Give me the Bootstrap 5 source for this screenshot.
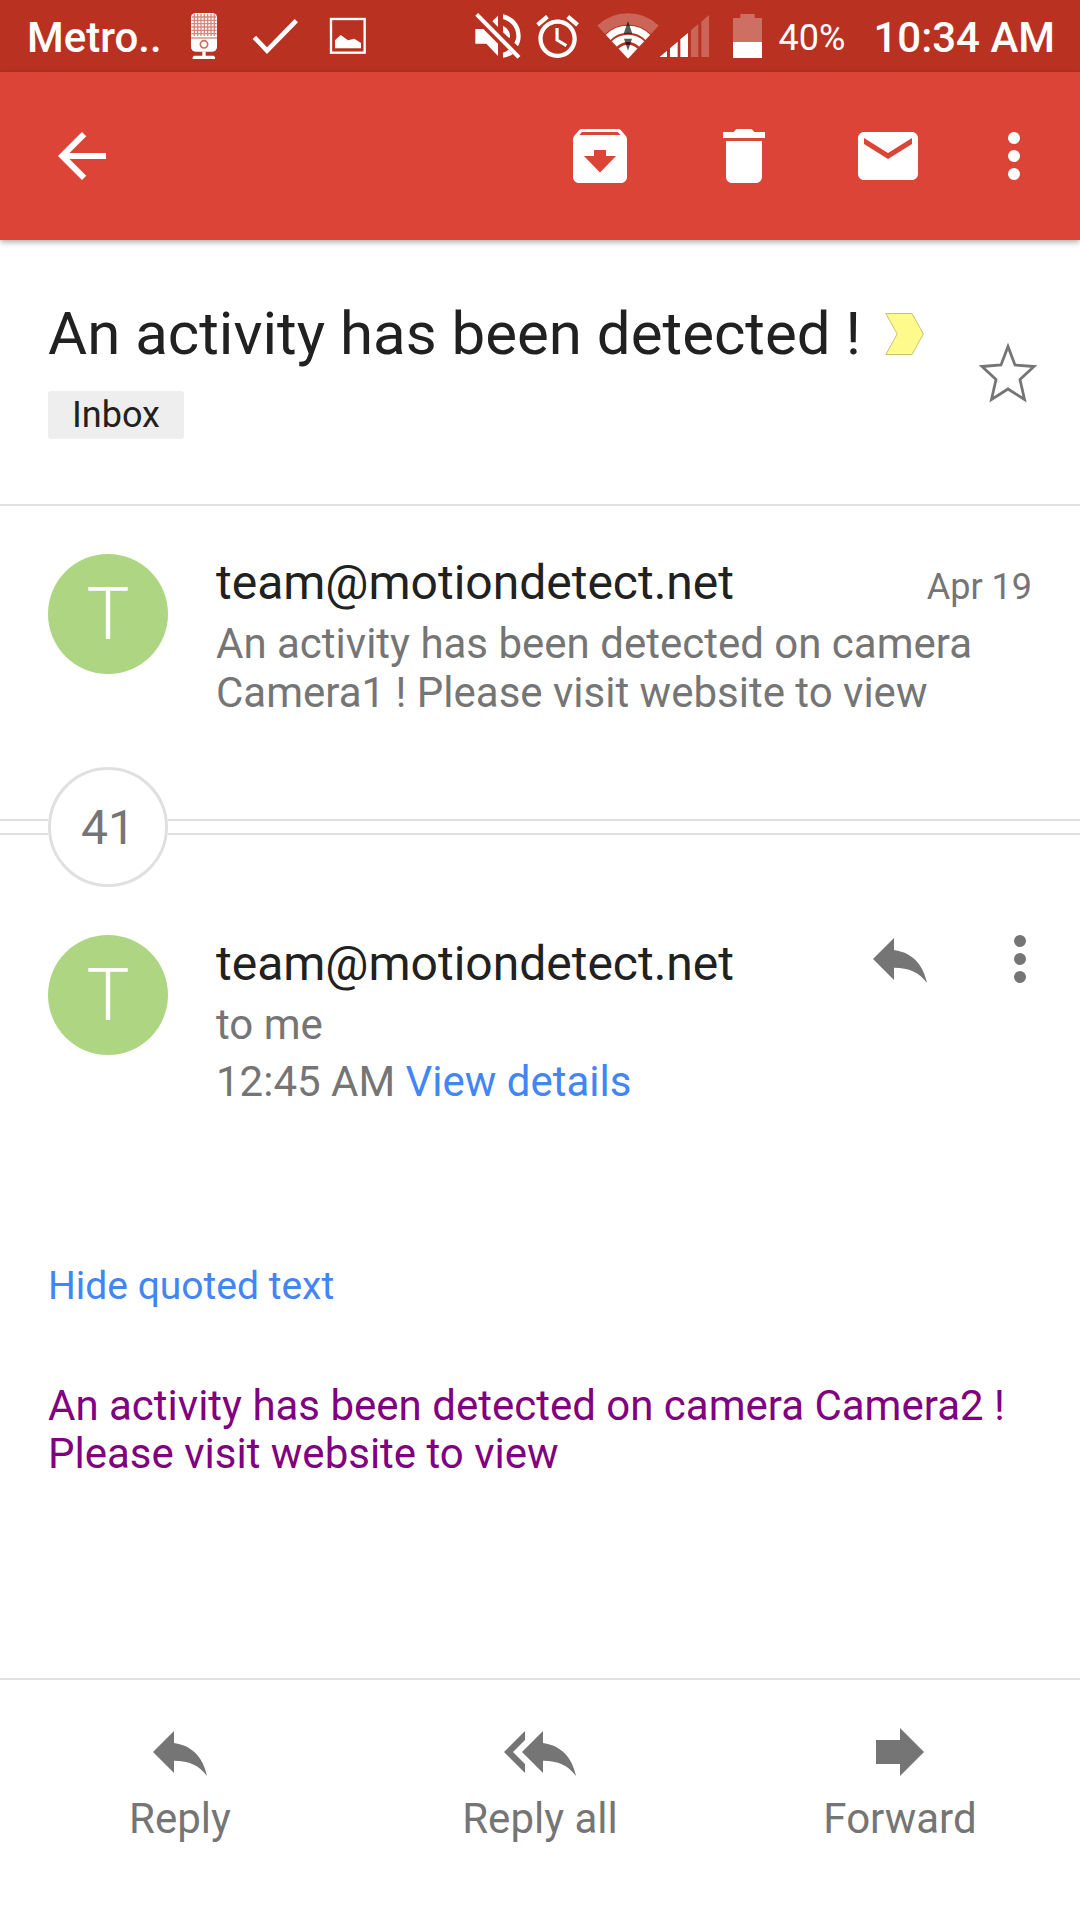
<!DOCTYPE html>
<html lang="en">
<head>
<meta charset="utf-8">
<meta name="viewport" content="width=device-width, initial-scale=1">
<title>An activity has been detected !</title>
<link href="https://cdn.jsdelivr.net/npm/bootstrap@5.3.0/dist/css/bootstrap.min.css" rel="stylesheet">
<style>
  body { font-family: Roboto, "Liberation Sans", sans-serif; color: #212121; font-size: 42px; line-height: 49px; }
  svg { display: block; flex: none; }
  a { color: #4285f4; text-decoration: none; }
  .icon-btn, .act-btn { border: 0; background: none; padding: 0; color: inherit; }
  .icon-btn { display: flex; align-items: center; justify-content: center; flex: none; }
  .status-bar { height: 72px; background: #b93221; padding: 0 25px 0 27px; }
  .status-text { padding-top: 4px; line-height: 68px; }
  .status-strong { font-weight: 500; }
  .status-carrier { margin-right: 6px; }
  .text-36 { font-size: 36px; }
  .app-bar { height: 168px; background: #db4437; padding: 0 12px 0 10px; box-shadow: 0 2px 6px rgba(0,0,0,.35); position: relative; }
  .app-bar .icon-btn { width: 144px; height: 144px; }
  .app-bar .icon-btn.overflow-btn { width: 108px; }
  .ink-muted { color: #757575; }
  .subject-row { padding: 0 36px 0 48px; border-bottom: 2px solid #e0e0e0; }
  .subject-text { padding: 58px 0 65px; }
  .subject-row .icon-btn { width: 72px; height: 72px; }
  .subject-title { font-size: 60px; line-height: 72px; font-weight: 400; margin: 0; }
  .subject-line { gap: 24px; margin-bottom: 21px; }
  .inbox-chip { display: block; width: fit-content; background: #eee; border-radius: 3px; padding: 0 24px; font-size: 36px; line-height: 48px; color: inherit; }
  .msg { padding: 48px 48px 0; gap: 48px; }
  .msg-first { padding-bottom: 50px; }
  .avatar { width: 120px; height: 120px; flex: none; background: #aed581; font-size: 72px; font-weight: 300; }
  .sender { font-size: 48px; line-height: 58px; margin-bottom: 7px; }
  .sender time { line-height: 42px; }
  .msg-tools { gap: 48px; margin-right: -24px; }
  .older { height: 120px; }
  .rails { height: 16px; border: solid #e0e0e0; border-width: 2px 0; }
  .rails-start { width: 48px; flex: none; }
  .older-count { width: 120px; height: 120px; flex: none; border: 3px solid #e0e0e0; background: #fff; font-size: 48px; }
  .msg-body { padding: 156px 48px 72px; line-height: 48px; }
  .quote-toggle { font-size: 39px; display: block; width: fit-content; margin-bottom: 72px; }
  .quoted { color: #800080; }
  .reply-bar { border-top: 2px solid #e0e0e0; padding: 36px 0 77px; }
  .act-btn { flex: 1 1 0; display: flex; flex-direction: column; align-items: center; gap: 7px; line-height: 48px; }
</style>
<script src="https://cdn.jsdelivr.net/npm/bootstrap@5.3.0/dist/js/bootstrap.bundle.min.js"></script>
</head>
<body class="bg-white d-flex flex-column min-vh-100">

<div class="status-bar text-white d-flex align-items-center">
  <span class="status-text status-strong status-carrier">Metro..</span>
  <svg width="72" height="72" viewBox="504 0 216 216" aria-label="Recorder">
    <rect x="573" y="39" width="78" height="116" rx="14" fill="#fff"/>
    <path d="M576 51h72M574 61h76M574 71h76M574 81h76M574 91h76M574 101h76M583 41v67M593 41v67M603 41v67M613 41v67M623 41v67M633 41v67M643 41v67" stroke="#d9857b" stroke-width="4"/>
    <path d="M573 114h78" stroke="#d9857b" stroke-width="4"/>
    <circle cx="612" cy="133" r="11" fill="none" stroke="#cf6a5e" stroke-width="5"/>
    <path d="M607 155h10v12h24l4 4v6h-67v-6l4-4h25z" fill="#fff"/>
  </svg>
  <svg width="72" height="72" viewBox="720 0 216 216" aria-label="Done"><path d="M763 112l38 40 88-90" fill="none" stroke="#fff" stroke-width="14"/></svg>
  <svg width="72" height="72" viewBox="936 0 216 216" aria-label="Picture"><rect x="993" y="57" width="101" height="101" fill="none" stroke="#fff" stroke-width="7"/><path d="M1005 145v-24l17-16 22 16 19-5 20 13v16z" fill="#fff"/></svg>

  <svg class="ms-auto" width="60" height="72" viewBox="54 0 180 216" fill="#fff" aria-label="Muted">
    <path d="M79 87h24l44 44v37l-35-37H79zM147 47v34l-17-17z"/>
    <path d="M162 43C195 50 215 75 215 108c0 12-3 22-8 31l-11-11c4-6 6-13 6-20 0-25-16-44-40-51zM162 78c13 6 21 17 21 30 0 3-1 5-2 7l-19-18zM162 158c6-2 12-5 17-9l13 13c-9 6-19 10-30 11z"/>
    <path d="M83 43l127 129" stroke="#fff" stroke-width="12"/>
  </svg>
  <svg width="60" height="72" viewBox="234 0 180 216" aria-label="Alarm set"><path transform="translate(249 33) scale(6.4)" fill="#fff" d="M22 5.72l-4.6-3.86-1.29 1.53 4.6 3.86L22 5.72zM7.88 3.39L6.6 1.86 2 5.71l1.29 1.53 4.59-3.85zM12.5 8H11v6l4.75 2.85.75-1.23-4-2.37V8zM12 4c-4.97 0-9 4.03-9 9s4.02 9 9 9c4.97 0 9-4.03 9-9s-4.03-9-9-9zm0 16c-3.87 0-7-3.13-7-7s3.13-7 7-7 7 3.13 7 7-3.13 7-7 7z"/></svg>
  <svg width="72" height="72" viewBox="414 0 216 216" aria-label="Wi-Fi">
    <clipPath id="fan"><path d="M537 176L444 76V20h186v56z"/></clipPath>
    <g clip-path="url(#fan)" fill="none" stroke="#fff">
      <circle cx="537" cy="174" r="117" stroke-width="34" opacity=".25"/>
      <circle cx="537" cy="174" r="86" stroke-width="21"/>
      <circle cx="537" cy="174" r="59" stroke-width="22"/>
      <circle cx="537" cy="174" r="40" fill="#fff" stroke="none"/>
    </g>
    <path d="M537 63l13 38h-26zM537 152l-12-36h24z" opacity=".65"/>
  </svg>
  <svg width="60" height="72" viewBox="630 0 180 216" fill="#fff" aria-label="Signal"><path d="M632 171l22-19v19zM663 171v-26l23-20v46zM694 171v-53l23-19v72z"/><path opacity=".25" d="M726 171V91l22-19v99zM757 171V65l23-20v126z"/></svg>
  <svg width="60" height="72" viewBox="810 0 180 216" fill="#fff" aria-label="Battery"><path opacity=".3" d="M852 54h22V42h43v12h22v72h-87z"/><path d="M852 126h87v48h-87z"/></svg>
  <span class="status-text text-36">40%</span>
  <span class="status-text status-strong ms-4 ps-1">10:34 AM</span>
</div>

<header class="app-bar text-white d-flex align-items-center">
  <button class="icon-btn me-auto" aria-label="Back"><svg width="72" height="72" viewBox="0 0 24 24" fill="#fff"><path d="M20 11H7.83l5.59-5.59L12 4l-8 8 8 8 1.41-1.41L7.83 13H20v-2z"/></svg></button>
  <button class="icon-btn" aria-label="Archive"><svg width="72" height="72" viewBox="0 0 24 24" fill="#fff"><path d="M20.54 5.23l-1.39-1.68C18.88 3.21 18.47 3 18 3H6c-.47 0-.88.21-1.16.55L3.46 5.23C3.17 5.57 3 6.02 3 6.5V19c0 1.1.9 2 2 2h14c1.1 0 2-.9 2-2V6.5c0-.48-.17-.93-.46-1.27zM12 17.5L6.65 12H10v-2h4v2h3.35L12 17.5zM5.12 5l.81-1h12l.94 1H5.12z"/></svg></button>
  <button class="icon-btn" aria-label="Delete"><svg width="72" height="72" viewBox="0 0 24 24" fill="#fff"><path d="M6 19c0 1.1.9 2 2 2h8c1.1 0 2-.9 2-2V7H6v12zM19 4h-3.5l-1-1h-5l-1 1H5v2h14V4z"/></svg></button>
  <button class="icon-btn" aria-label="Mark unread"><svg width="72" height="72" viewBox="0 0 24 24" fill="#fff"><path d="M20 4H4c-1.1 0-1.99.9-1.99 2L2 18c0 1.1.9 2 2 2h16c1.1 0 2-.9 2-2V6c0-1.1-.9-2-2-2zm0 4l-8 5-8-5V6l8 5 8-5v2z"/></svg></button>
  <button class="icon-btn overflow-btn" aria-label="More options"><svg width="72" height="72" viewBox="0 0 24 24" fill="#fff"><circle cx="12" cy="6" r="2"/><circle cx="12" cy="12" r="2"/><circle cx="12" cy="18" r="2"/></svg></button>
</header>

<main class="flex-grow-1">
  <div class="subject-row d-flex align-items-center">
    <div class="subject-text flex-grow-1">
      <div class="subject-line d-flex align-items-center">
        <h1 class="subject-title">An activity has been detected !</h1>
        <svg width="39" height="42" viewBox="0 0 39 42" aria-label="Important"><path d="M.8.5H27L38.4 21 27 41.5H.8L12.2 21z" fill="#fffa8c" stroke="#c8c26e"/></svg>
      </div>
      <a href="#" class="inbox-chip">Inbox</a>
    </div>
    <button class="icon-btn ink-muted" aria-label="Star"><svg width="72" height="72" viewBox="0 0 72 72"><path d="M36 10.500L43 29 62 30.500 48 43.500 52.500 63.500 36 53 19.500 63.500 24 43.500 10 30.500 29 29z" fill="none" stroke="currentColor" stroke-width="2.800"/></svg></button>
  </div>

  <article class="msg msg-first d-flex">
    <div class="avatar rounded-circle text-white d-flex align-items-center justify-content-center">T</div>
    <div class="flex-grow-1">
      <div class="sender d-flex justify-content-between align-items-baseline"><span>team@motiondetect.net</span><time class="text-36 ink-muted">Apr 19</time></div>
      <div class="ink-muted">An activity has been detected on camera Camera1 ! Please visit website to view</div>
    </div>
  </article>

  <div class="older d-flex align-items-center">
    <div class="rails rails-start"></div>
    <button class="older-count rounded-circle ink-muted p-0" aria-label="Show 41 older messages">41</button>
    <div class="rails flex-grow-1"></div>
  </div>

  <article class="msg d-flex">
    <div class="avatar rounded-circle text-white d-flex align-items-center justify-content-center">T</div>
    <div class="flex-grow-1">
      <div class="sender">team@motiondetect.net</div>
      <div class="ink-muted mb-2">to me</div>
      <div class="ink-muted">12:45 AM <a href="#">View details</a></div>
    </div>
    <div class="msg-tools ink-muted d-flex align-items-start">
      <button class="icon-btn" aria-label="Reply"><svg width="72" height="48" viewBox="0 4 24 16" fill="currentColor"><path d="M10 9V5l-7 7 7 7v-4.100c5 0 8.500 1.600 11 5.100-1-5-4-10-11-11z"/></svg></button>
      <button class="icon-btn" aria-label="Message options"><svg width="72" height="48" viewBox="0 4 24 16" fill="currentColor"><circle cx="12" cy="6" r="2"/><circle cx="12" cy="12" r="2"/><circle cx="12" cy="18" r="2"/></svg></button>
    </div>
  </article>

  <div class="msg-body">
    <a href="#" class="quote-toggle">Hide quoted text</a>
    <div class="quoted">An activity has been detected on camera Camera2 ! Please visit website to view</div>
  </div>
</main>

<footer class="reply-bar ink-muted d-flex">
  <button class="act-btn"><svg width="72" height="72" viewBox="0 0 24 24" fill="currentColor"><path d="M10 9V5l-7 7 7 7v-4.100c5 0 8.500 1.600 11 5.100-1-5-4-10-11-11z"/></svg>Reply</button>
  <button class="act-btn"><svg width="72" height="72" viewBox="0 0 24 24" fill="currentColor"><path d="M7 8V5l-7 7 7 7v-3l-4-4 4-4zm6 1V5l-7 7 7 7v-4.100c5 0 8.500 1.600 11 5.100-1-5-4-10-11-11z"/></svg>Reply all</button>
  <button class="act-btn"><svg width="72" height="72" viewBox="0 0 24 24" fill="currentColor"><path d="M12 8V4l8 8-8 8v-4H4V8z"/></svg>Forward</button>
</footer>
</body>
</html>
